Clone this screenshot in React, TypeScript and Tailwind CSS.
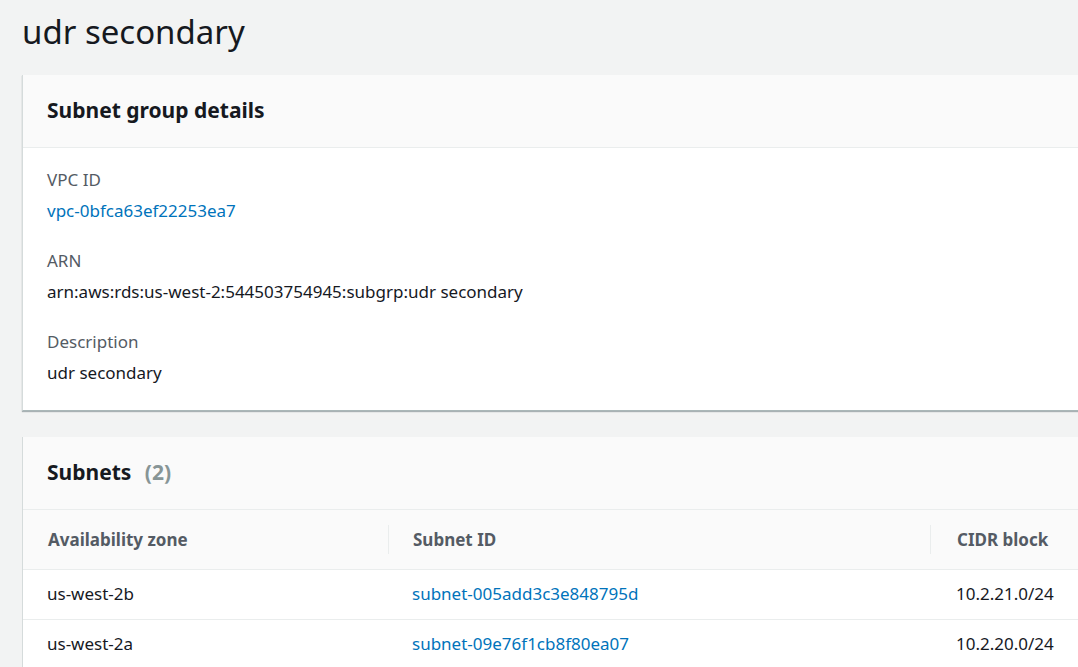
export default function App() {
  const rows = [
    { az: "us-west-2b", id: "subnet-005add3c3e848795d", cidr: "10.2.21.0/24" },
    { az: "us-west-2a", id: "subnet-09e76f1cb8f80ea07", cidr: "10.2.20.0/24" },
  ];

  return (
    <div className="h-screen w-full overflow-hidden bg-[#f2f3f3] text-[#16191f] font-['Noto_Sans',sans-serif]">
      <div className="w-[1120px] pl-[22px]">
        {/* Page title */}
        <h1 className="pt-[11px] h-[75px] text-[33px] leading-[42px] font-normal">udr secondary</h1>

        {/* Details card */}
        <section className="bg-white border-l border-[#d5dbdb] shadow-[0_1px_1px_0_rgba(0,28,36,0.3)] border-b border-b-[#aab7b8]">
          <div className="h-[73px] flex items-center px-[24px] bg-[#fafafa] border-b border-[#eaeded]">
            <h2 className="text-[21px] font-bold">Subnet group details</h2>
          </div>
          <div className="px-[24px] pt-[20px] pb-[25px] flex flex-col gap-[26px] text-[17px]">
            <div>
              <div className="text-[#545b64] leading-[24px]">VPC ID</div>
              <div className="text-[#0073bb] leading-[24px] mt-[7px]">vpc-0bfca63ef22253ea7</div>
            </div>
            <div>
              <div className="text-[#545b64] leading-[24px]">ARN</div>
              <div className="leading-[24px] mt-[7px]">arn:aws:rds:us-west-2:544503754945:subgrp:udr secondary</div>
            </div>
            <div>
              <div className="text-[#545b64] leading-[24px]">Description</div>
              <div className="leading-[24px] mt-[7px]">udr secondary</div>
            </div>
          </div>
        </section>

        {/* Subnets card */}
        <section className="mt-[26px] bg-white border-l border-[#d5dbdb]">
          <div className="h-[73px] flex items-center px-[24px] bg-[#fafafa] border-b border-[#eaeded]">
            <h2 className="text-[21px] font-bold">
              Subnets <span className="ml-[8px] text-[#879596] font-bold">(2)</span>
            </h2>
          </div>
          <table className="w-full text-[17px] border-collapse">
            <thead>
              <tr className="h-[59px] bg-[#fafafa] border-b border-[#eaeded] text-[#545b64] text-left">
                <th className="w-[365px] pl-[25px] font-bold">Availability zone</th>
                <th className="w-[542px] p-0 font-bold">
                  <div className="border-l border-[#eaeded] h-[29px] flex items-center pl-[24px]">Subnet ID</div>
                </th>
                <th className="p-0 font-bold">
                  <div className="border-l border-[#eaeded] h-[29px] flex items-center pl-[26px]">CIDR block</div>
                </th>
              </tr>
            </thead>
            <tbody>
              {rows.map((r) => (
                <tr key={r.id} className="h-[50px] border-b border-[#eaeded]">
                  <td className="pl-[24px]">{r.az}</td>
                  <td className="pl-[24px] text-[#0073bb]">{r.id}</td>
                  <td className="pl-[26px]">{r.cidr}</td>
                </tr>
              ))}
            </tbody>
          </table>
        </section>
      </div>
    </div>
  );
}
